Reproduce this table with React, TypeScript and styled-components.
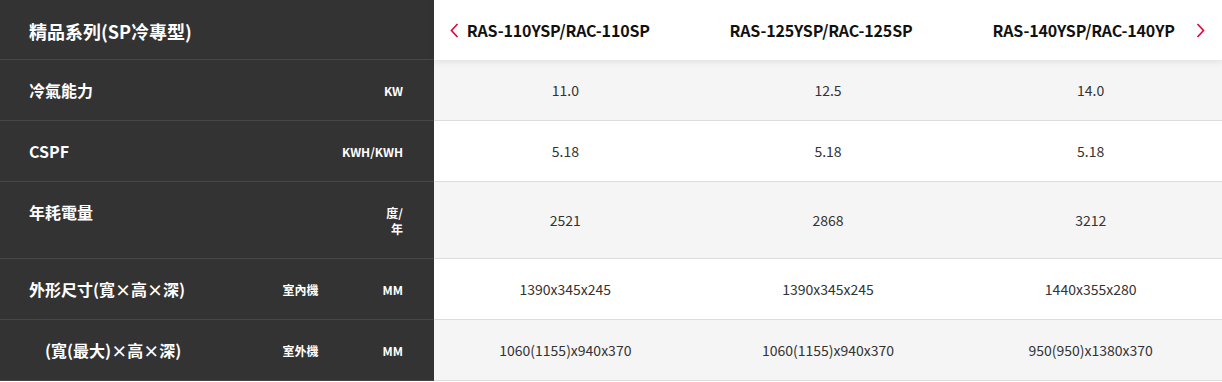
import React from "react";
import styled, { createGlobalStyle } from "styled-components";

const GlobalStyle = createGlobalStyle`
  html, body {
    margin: 0;
    padding: 0;
    background: #ffffff;
  }
  body {
    font-family: "Noto Sans CJK TC", "Noto Sans", sans-serif;
  }
`;

type Spec = {
  label: string;
  indent?: boolean;
  sub?: string;
  unit: string[];
  values: string[];
};

const models = ["RAS-110YSP/RAC-110SP", "RAS-125YSP/RAC-125SP", "RAS-140YSP/RAC-140YP"];

const specs: Spec[] = [
  { label: "冷氣能力", unit: ["KW"], values: ["11.0", "12.5", "14.0"] },
  { label: "CSPF", unit: ["KWH/KWH"], values: ["5.18", "5.18", "5.18"] },
  { label: "年耗電量", unit: ["度/", "年"], values: ["2521", "2868", "3212"] },
  {
    label: "外形尺寸(寬×高×深)",
    sub: "室內機",
    unit: ["MM"],
    values: ["1390x345x245", "1390x345x245", "1440x355x280"],
  },
  {
    label: "(寬(最大)×高×深)",
    indent: true,
    sub: "室外機",
    unit: ["MM"],
    values: ["1060(1155)x940x370", "1060(1155)x940x370", "950(950)x1380x370"],
  },
];

const Table = styled.div`
  display: flex;
  flex-direction: column;
  width: 1222px;
`;

const HeaderRow = styled.div`
  display: flex;
  height: 59px;
  border-bottom: 1px solid #484848;
  position: relative;
  z-index: 2;
`;

const HeaderLabel = styled.div`
  width: 434px;
  box-sizing: border-box;
  background: #333333;
  color: #ffffff;
  font-size: 18px;
  font-weight: 700;
  line-height: 24px;
  padding: 19px 29px 0;
  white-space: nowrap;
`;

const HeaderModels = styled.div`
  flex: 1;
  display: flex;
  background: #ffffff;
  position: relative;
  box-shadow: 0 3px 6px rgba(0, 0, 0, 0.07);
  margin-bottom: -1px;
`;

const ModelName = styled.div`
  flex: 1;
  display: flex;
  align-items: center;
  justify-content: center;
  padding-right: 14px;
  font-size: 16px;
  font-weight: 700;
  letter-spacing: -0.15px;
  color: #111111;
  white-space: nowrap;
`;

const Arrow = styled.button<{ $side: "left" | "right" }>`
  position: absolute;
  top: 22px;
  ${(p) => (p.$side === "left" ? "left: 14px;" : "right: 16px;")}
  width: 12px;
  height: 16px;
  padding: 0;
  border: 0;
  background: none;
  display: flex;
  align-items: center;
  justify-content: center;
  cursor: pointer;
`;

const Row = styled.div<{ $shade: boolean }>`
  display: flex;
  border-bottom: 1px solid #dddddd;
  background: ${(p) => (p.$shade ? "#f5f5f5" : "#ffffff")};
`;

const LabelCell = styled.div`
  width: 434px;
  box-sizing: border-box;
  background: #333333;
  border-bottom: 1px solid #484848;
  margin-bottom: -1px;
  color: #ffffff;
  display: flex;
  align-items: flex-start;
  padding: 21px 31px 21px 29px;
`;

const Label = styled.div<{ $indent?: boolean }>`
  flex: 1;
  font-size: 16px;
  font-weight: 700;
  line-height: 18px;
  padding-left: ${(p) => (p.$indent ? "16px" : "0")};
  white-space: nowrap;
`;

const SubLabel = styled.div`
  width: 100px;
  font-size: 12px;
  font-weight: 700;
  line-height: 16px;
  margin-top: 2px;
  white-space: nowrap;
`;

const Unit = styled.div`
  text-align: right;
  font-size: 12px;
  font-weight: 700;
  line-height: 16px;
  margin-top: 2px;
  white-space: nowrap;
`;

const ValueCell = styled.div`
  flex: 1;
  display: flex;
  align-items: center;
  justify-content: center;
  font-size: 14px;
  color: #333333;
`;

const Chevron: React.FC<{ dir: "left" | "right" }> = ({ dir }) => (
  <svg width="9" height="15" viewBox="0 0 9 15" fill="none">
    <path
      d={dir === "left" ? "M7.5 1 L1.5 7.5 L7.5 14" : "M1.5 1 L7.5 7.5 L1.5 14"}
      stroke="#d6073f"
      strokeWidth="1.6"
    />
  </svg>
);

export default function App() {
  return (
    <>
      <GlobalStyle />
      <Table>
        <HeaderRow>
          <HeaderLabel>精品系列(SP冷專型)</HeaderLabel>
          <HeaderModels>
            <Arrow $side="left" aria-label="previous">
              <Chevron dir="left" />
            </Arrow>
            {models.map((m) => (
              <ModelName key={m}>{m}</ModelName>
            ))}
            <Arrow $side="right" aria-label="next">
              <Chevron dir="right" />
            </Arrow>
          </HeaderModels>
        </HeaderRow>
        {specs.map((s, i) => (
          <Row key={i} $shade={i % 2 === 0}>
            <LabelCell>
              <Label $indent={s.indent}>{s.label}</Label>
              {s.sub && <SubLabel>{s.sub}</SubLabel>}
              <Unit>
                {s.unit.map((u, j) => (
                  <div key={j}>{u}</div>
                ))}
              </Unit>
            </LabelCell>
            {s.values.map((v, j) => (
              <ValueCell key={j}>{v}</ValueCell>
            ))}
          </Row>
        ))}
      </Table>
    </>
  );
}
